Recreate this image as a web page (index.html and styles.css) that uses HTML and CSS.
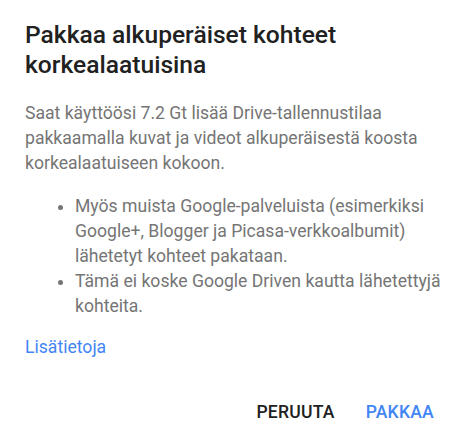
FILE: index.html
```html
<!DOCTYPE html>
<html lang="fi">
<head>
<meta charset="utf-8">
<title>Pakkaa alkuperäiset kohteet</title>
<link rel="stylesheet" href="styles.css">
</head>
<body>
<div class="dialog">
  <h1 class="title">Pakkaa alkuperäiset kohteet korkealaatuisina</h1>
  <p class="text">Saat käyttöösi 7.2 Gt lisää Drive-tallennustilaa pakkaamalla kuvat ja videot alkuperäisestä koosta korkealaatuiseen kokoon.</p>
  <ul class="list">
    <li>Myös muista Google-palveluista (esimerkiksi Google+, Blogger ja Picasa-verkkoalbumit) lähetetyt kohteet pakataan.</li>
    <li>Tämä ei koske Google Driven kautta lähetettyjä kohteita.</li>
  </ul>
  <a class="link" href="#">Lisätietoja</a>
  <div class="actions">
    <button class="btn btn-cancel">Peruuta</button>
    <button class="btn btn-ok">Pakkaa</button>
  </div>
</div>
</body>
</html>
```
FILE: styles.css
```css
html, body {
  margin: 0;
  padding: 0;
  background: #ffffff;
}
body {
  font-family: Roboto, "Liberation Sans", sans-serif;
}
.dialog {
  padding: 20px 24px 0 25px;
  display: flex;
  flex-direction: column;
}
.title {
  margin: 0;
  font-size: 24.6px;
  font-weight: 500;
  line-height: 30px;
  color: #212121;
}
.text {
  margin: 20.5px 0 0 0;
  font-size: 17.6px;
  line-height: 25px;
  color: #757575;
}
.list {
  margin: 18px 0 0 0;
  padding: 0 0 0 50px;
  font-size: 17.6px;
  line-height: 25px;
  color: #757575;
}
.link {
  margin-top: 16px;
  font-size: 17.6px;
  line-height: 25px;
  color: #4285f4;
  text-decoration: none;
  align-self: flex-start;
}
.actions {
  margin-top: 40px;
  display: flex;
  justify-content: flex-end;
  gap: 31px;
  padding-right: 9px;
}
.btn {
  border: none;
  background: none;
  padding: 0;
  font-family: Roboto, "Liberation Sans", sans-serif;
  font-size: 17.6px;
  font-weight: 500;
  letter-spacing: 0.2px;
  line-height: 25px;
  text-transform: uppercase;
  cursor: pointer;
}
.btn-cancel { color: #212121; }
.btn-ok { color: #4285f4; }
```
